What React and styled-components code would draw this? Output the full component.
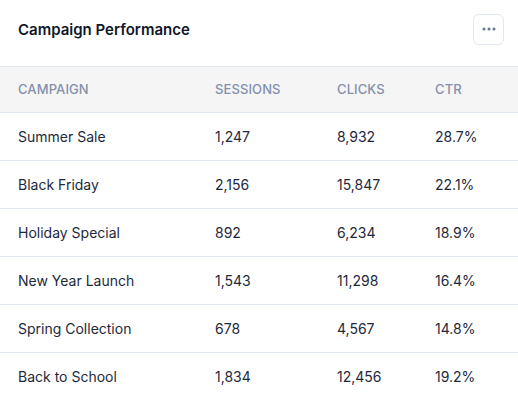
import React from "react";
import styled, { createGlobalStyle } from "styled-components";

const Global = createGlobalStyle`
  html, body { margin: 0; padding: 0; background: #ffffff; }
  body { font-family: Inter, "Noto Sans", sans-serif; -webkit-font-smoothing: antialiased; }
  * { box-sizing: border-box; }
`;

const Card = styled.div`
  width: 518px;
  background: #ffffff;
`;

const Header = styled.div`
  height: 67px;
  display: flex;
  align-items: center;
  justify-content: space-between;
  padding: 0 14px 8px 18px;
  border-bottom: 1px solid #e2e8f0;
`;

const Title = styled.h2`
  margin: 0;
  font-size: 15px;
  font-weight: 600;
  color: #0f172a;
`;

const MoreButton = styled.button`
  width: 31px;
  height: 31px;
  border: 1px solid #e2e8f0;
  border-radius: 6px;
  background: #fff;
  display: flex;
  align-items: center;
  justify-content: center;
  padding: 0;
`;

const Row = styled.div`
  display: grid;
  grid-template-columns: 197px 122px 98px 1fr;
  align-items: center;
  height: ${(p) => (p.$head ? "46px" : "48px")};
  background: ${(p) => (p.$head ? "#f5f5f6" : "#fff")};
  border-bottom: ${(p) => (p.$last ? "none" : "1px solid #e2e8f0")};
`;

const Cell = styled.div`
  padding-left: 18px;
  padding-bottom: 1px;
  font-size: ${(p) => (p.$head ? "13px" : "14px")};
  font-weight: ${(p) => (p.$head ? 500 : 400)};
  color: ${(p) => (p.$head ? "#8390ab" : "#1e293b")};
  text-transform: ${(p) => (p.$head ? "uppercase" : "none")};
  letter-spacing: ${(p) => (p.$head ? "0.1px" : "0")};
`;

const data = [
  ["Summer Sale", "1,247", "8,932", "28.7%"],
  ["Black Friday", "2,156", "15,847", "22.1%"],
  ["Holiday Special", "892", "6,234", "18.9%"],
  ["New Year Launch", "1,543", "11,298", "16.4%"],
  ["Spring Collection", "678", "4,567", "14.8%"],
  ["Back to School", "1,834", "12,456", "19.2%"],
];

export default function App() {
  return (
    <>
      <Global />
      <Card>
        <Header>
          <Title>Campaign Performance</Title>
          <MoreButton aria-label="More">
            <svg width="14" height="4" viewBox="0 0 14 4">
              <circle cx="2" cy="2" r="1.5" fill="#64748b" />
              <circle cx="7" cy="2" r="1.5" fill="#64748b" />
              <circle cx="12" cy="2" r="1.5" fill="#64748b" />
            </svg>
          </MoreButton>
        </Header>
        <Row $head>
          <Cell $head>Campaign</Cell>
          <Cell $head>Sessions</Cell>
          <Cell $head>Clicks</Cell>
          <Cell $head>CTR</Cell>
        </Row>
        {data.map((r, i) => (
          <Row key={r[0]} $last={i === data.length - 1}>
            {r.map((c, j) => (
              <Cell key={j}>{c}</Cell>
            ))}
          </Row>
        ))}
      </Card>
    </>
  );
}
